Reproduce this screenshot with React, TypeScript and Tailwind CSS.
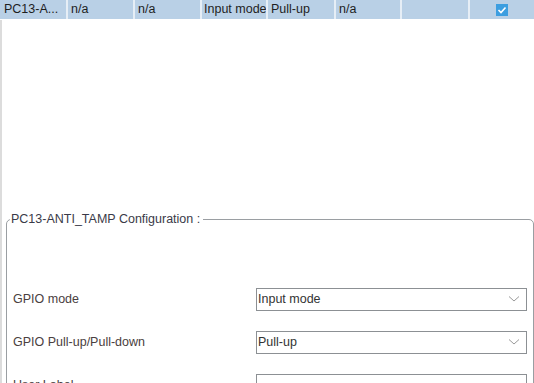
import React from "react";

const cols = [
  { text: "PC13-A...", w: "w-[68px]", pad: "pl-1" },
  { text: "n/a", w: "w-[67px]", pad: "pl-[3px]" },
  { text: "n/a", w: "w-[67px]", pad: "pl-[3px]" },
  { text: "Input mode", w: "w-[66px]", pad: "pl-[2px]" },
  { text: "Pull-up", w: "w-[68px]", pad: "pl-[3px]" },
  { text: "n/a", w: "w-[66px]", pad: "pl-[3px]" },
  { text: "", w: "w-[68px]", pad: "pl-[3px]" },
];

function Chevron() {
  return (
    <svg width="12" height="8" viewBox="0 0 12 8" className="shrink-0">
      <path d="M1 1.5 L6 6 L11 1.5" fill="none" stroke="#9a9a9a" strokeWidth="1" />
    </svg>
  );
}

function SelectBox({ value }: { value: string }) {
  return (
    <div className="w-[271px] h-[23px] border border-[#8c9094] bg-white flex items-center justify-between pl-[1px] pr-[6px] text-[#333]">
      <span>{value}</span>
      {value && <Chevron />}
    </div>
  );
}

export default function App() {
  return (
    <div
      className="w-[534px] h-[383px] bg-white overflow-hidden text-[12.5px] flex flex-col"
      style={{ fontFamily: "'Liberation Sans', Arial, sans-serif" }}
    >
      {/* selected pin row */}
      <div className="h-[19px] flex bg-[#b9d0e6] text-[#1e1e1e] shrink-0">
        {cols.map((c, i) => (
          <div
            key={i}
            className={`${c.w} ${c.pad} h-full flex items-center border-r-2 border-[#e6eef6] whitespace-nowrap overflow-hidden`}
          >
            {c.text}
          </div>
        ))}
        <div className="flex-1 flex items-center justify-center">
          <div className="w-[12px] h-[12px] bg-[#3c9ee0] flex items-center justify-center">
            <svg width="10" height="10" viewBox="0 0 10 10">
              <path d="M1.5 5 L4 7.5 L8.5 2.5" fill="none" stroke="white" strokeWidth="1.6" />
            </svg>
          </div>
        </div>
      </div>

      <div className="flex-1 mt-[1px] border-l-2 border-[#dcdcdc] pl-[4px] pt-[190px]">
        <fieldset className="border border-[#9a9ea2] rounded-[5px] h-[200px] px-0">
          <legend className="ml-[3px] pl-[1px] pr-[3px] text-[#3a3a48]">
            PC13-ANTI_TAMP Configuration :
          </legend>
          <div className="flex flex-col gap-[20px] pt-[59px] px-[6px] text-[#4a4040]">
            <div className="flex items-center justify-between">
              <span>GPIO mode</span>
              <SelectBox value="Input mode" />
            </div>
            <div className="flex items-center justify-between">
              <span>GPIO Pull-up/Pull-down</span>
              <SelectBox value="Pull-up" />
            </div>
            <div className="flex items-center justify-between">
              <span>User Label</span>
              <SelectBox value="" />
            </div>
          </div>
        </fieldset>
      </div>
    </div>
  );
}
